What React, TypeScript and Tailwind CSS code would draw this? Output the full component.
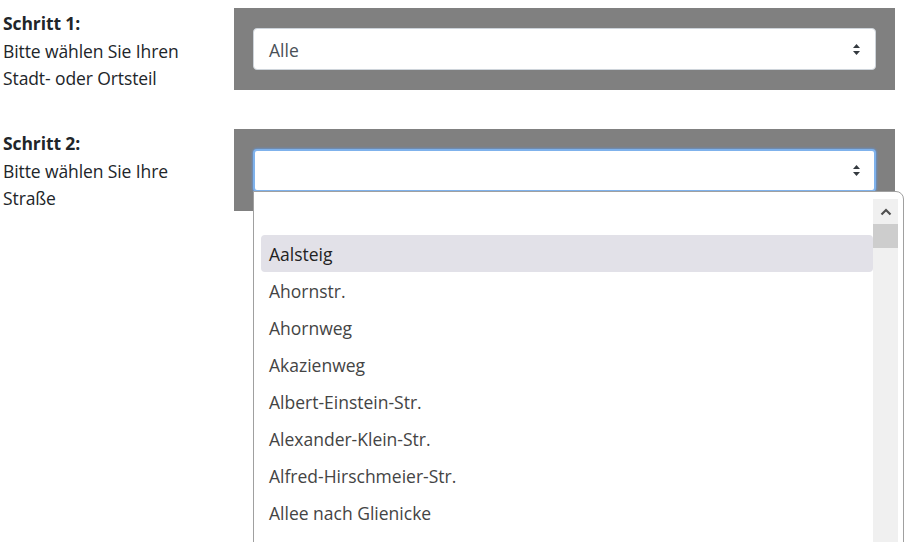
import React from "react";

const STREETS = [
  "Aalsteig",
  "Ahornstr.",
  "Ahornweg",
  "Akazienweg",
  "Albert-Einstein-Str.",
  "Alexander-Klein-Str.",
  "Alfred-Hirschmeier-Str.",
  "Allee nach Glienicke",
];

function SortIcon() {
  return (
    <svg width="9" height="13" viewBox="0 0 9 13" className="shrink-0">
      <path d="M4.5 1 L8 5 L1 5 Z" fill="#343a40" />
      <path d="M4.5 12 L8 8 L1 8 Z" fill="#343a40" />
    </svg>
  );
}

function Step({
  title,
  lines,
  children,
  pad,
}: {
  title: string;
  lines: string[];
  children: React.ReactNode;
  pad: string;
}) {
  return (
    <div className="flex h-[82px]">
      <div className={`w-[234px] shrink-0 pl-[3px] text-[17.5px] leading-[27.5px] text-[#212529] tracking-[-0.1px] ${pad}`}>
        <div className="font-bold">{title}</div>
        {lines.map((l) => (
          <div key={l} className="whitespace-nowrap">{l}</div>
        ))}
      </div>
      <div className="w-[661px] h-[82px] bg-[#808080] pl-[19px] pr-[19px] pt-[20px]">{children}</div>
    </div>
  );
}

export default function App() {
  return (
    <div
      className="relative w-[920px] h-[542px] overflow-hidden bg-white pt-[8px]"
      style={{ fontFamily: '"Open Sans", "Noto Sans", sans-serif' }}
    >
      <Step title="Schritt 1:" lines={["Bitte wählen Sie Ihren", "Stadt- oder Ortsteil"]} pad="pt-[2px]">
        <div className="h-[42px] bg-white border border-[#ced4da] rounded-[4px] flex items-center justify-between pl-[15px] pr-[14px] text-[17.5px] text-[#495057]">
          <span className="pt-[2px]">Alle</span>
          <SortIcon />
        </div>
      </Step>

      <div className="h-[39px]" />

      <Step title="Schritt 2:" lines={["Bitte wählen Sie Ihre", "Straße"]} pad="pt-[1px]">
        <div className="h-[43px] bg-white border-2 border-[#7fb2ec] rounded-[4px] shadow-[0_0_2px_1px_rgba(90,150,230,0.6)] flex items-center justify-end pr-[13px]">
          <SortIcon />
        </div>
      </Step>

      {/* open dropdown list */}
      <div className="absolute left-[253px] top-[191px] w-[651px] h-[360px] bg-white border border-[#a0a0a0] rounded-tr-[8px] flex">
        <div className="flex-1 pl-[7px] pt-[6px] text-[17.5px] text-[#444]">
          <div className="h-[37px]" />
          {STREETS.map((s, i) => (
            <div
              key={s}
              className={`h-[37px] flex items-center pl-[8px] pt-[1px] rounded-[4px] whitespace-nowrap ${i === 0 ? "bg-[#e2e1e8] text-[#222]" : ""}`}
            >
              {s}
            </div>
          ))}
        </div>
        <div className="w-[25px] mr-[5px] mt-[7px] bg-[#f0f0f0] flex flex-col items-center">
          <div className="h-[25px] flex items-center justify-center">
            <svg width="12" height="8" viewBox="0 0 12 8">
              <path d="M1.5 6.5 L6 2 L10.5 6.5" stroke="#505050" strokeWidth="2.2" fill="none" />
            </svg>
          </div>
          <div className="w-full h-[24px] bg-[#cdcdcd]" />
        </div>
      </div>
    </div>
  );
}
